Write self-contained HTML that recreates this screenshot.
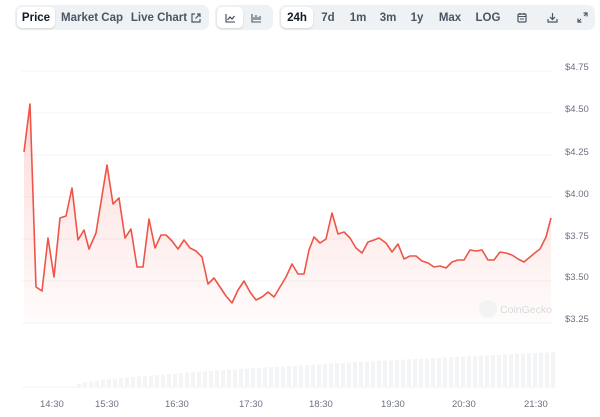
<!DOCTYPE html><html><head><style>
body{margin:0;width:600px;height:417px;background:#fff;font-family:"Liberation Sans",sans-serif;overflow:hidden;position:relative}
.g{position:absolute;top:5px;height:25px;background:#eff2f5;border-radius:7px;display:flex;align-items:center;padding:0 2px;box-sizing:border-box}
.b{height:21px;display:flex;align-items:center;justify-content:center;font-size:11.5px;font-weight:bold;color:#4b5563;border-radius:5px;padding:0 6px;white-space:nowrap;flex:none}
.w{background:#fff;color:#111827;box-shadow:0 1px 2px rgba(0,0,0,.12)}
.yl{position:absolute;left:565px;font-size:9.5px;color:#6b7280}
.xl{position:absolute;top:399px;font-size:9.5px;color:#6b7280}
</style></head><body>
<div class="g" style="left:15px;width:194px"><div class="b w" style="width:38px;padding:0">Price</div><div class="b" style="width:74px;padding:0">Market Cap</div><div class="b" style="width:74px;padding:0">Live Chart <svg width="10" height="10" viewBox="0 0 10 10" style="margin-left:4px"><path d="M4 1H1v8h8V6M6 1h3v3M9 1L4.5 5.5" fill="none" stroke="#4b5563" stroke-width="1.2"/></svg></div></div>
<div class="g" style="left:215px;width:58px"><div class="b w" style="width:26px;padding:0"><svg width="11" height="10"><path d="M1 1v8h9M2.5 7l2.5-3 2 2 2.5-3" fill="none" stroke="#374151" stroke-width="1.1"/></svg></div><div class="b" style="width:26px;padding:0"><svg width="11" height="10"><path d="M1 1v8h9M3 7V4M5 7V2M7 7V4M9 7V3" fill="none" stroke="#4b5563" stroke-width="1.1"/></svg></div></div>
<div class="g" style="left:279px;width:316px"><div class="b w" style="width:32px;padding:0">24h</div><div class="b" style="width:30px;padding:0">7d</div><div class="b" style="width:30px;padding:0">1m</div><div class="b" style="width:30px;padding:0">3m</div><div class="b" style="width:28px;padding:0">1y</div><div class="b" style="width:38px;padding:0">Max</div><div class="b" style="width:38px;padding:0">LOG</div><div class="b" style="width:30px;padding:0"><svg width="10" height="11"><rect x="1" y="2" width="8" height="8" rx="1" fill="none" stroke="#4b5563" stroke-width="1.2"/><path d="M1 4.5h8M3 1v2M7 1v2M3 7h4" stroke="#4b5563" stroke-width="1.1"/></svg></div><div class="b" style="width:30px;padding:0"><svg width="11" height="11"><path d="M5.5 1v6M3 5l2.5 2.5L8 5M1 7v3h9V7" fill="none" stroke="#4b5563" stroke-width="1.2"/></svg></div><div class="b" style="width:30px;padding:0"><svg width="11" height="11"><path d="M6.5 1H10v3.5M10 1L7 4M4.5 10H1V6.5M1 10l3-3" fill="none" stroke="#4b5563" stroke-width="1.2"/></svg></div></div>
<svg width="600" height="417" style="position:absolute;left:0;top:0">
<defs><linearGradient id="f" x1="0" y1="0" x2="0" y2="1"><stop offset="0" stop-color="#f05a4e" stop-opacity=".22"/><stop offset="1" stop-color="#f05a4e" stop-opacity=".02"/></linearGradient></defs>
<g stroke="#f3f3f5" stroke-width="1"><line x1="22" y1="71" x2="552" y2="71"/><line x1="22" y1="113" x2="552" y2="113"/><line x1="22" y1="155" x2="552" y2="155"/><line x1="22" y1="197" x2="552" y2="197"/><line x1="22" y1="239" x2="552" y2="239"/><line x1="22" y1="281" x2="552" y2="281"/><line x1="22" y1="323" x2="552" y2="323"/><line x1="22" y1="387" x2="556" y2="387"/></g>
<path d="M24,152 L30,104 L36,287 L42,291 L48,238 L54,277 L60,218 L66,216 L72,188 L78,240 L84,230 L89,249 L96,233 L107,165 L113,204 L119,198 L125,238 L131,229 L137,267 L143,267 L149,219 L155,248 L161,235 L166,235 L172,241 L178,249 L184,240 L190,248 L196,251 L202,257 L208,284 L214,278 L220,287 L226,296 L232,303 L238,290 L244,281 L250,292 L256,300 L262,297 L268,292 L274,297 L280,287 L286,277 L292,264 L298,274 L304,274 L309,250 L314,237 L320,243 L326,239 L332,213 L338,234 L344,232 L350,238 L356,248 L362,253 L368,242 L374,240 L379,238 L386,243 L392,252 L398,244 L404,259 L410,256 L416,256 L422,261 L428,263 L434,267 L440,266 L446,268 L452,262 L458,260 L464,260 L470,250 L476,251 L482,250 L488,260 L494,260 L500,252 L506,253 L512,255 L518,259 L524,262 L530,257 L536,252 L540,249 L546,237 L551,218" fill="none" stroke="#ee5448" stroke-width="1.6" stroke-linejoin="round"/>
<path d="M24,152 L30,104 L36,287 L42,291 L48,238 L54,277 L60,218 L66,216 L72,188 L78,240 L84,230 L89,249 L96,233 L107,165 L113,204 L119,198 L125,238 L131,229 L137,267 L143,267 L149,219 L155,248 L161,235 L166,235 L172,241 L178,249 L184,240 L190,248 L196,251 L202,257 L208,284 L214,278 L220,287 L226,296 L232,303 L238,290 L244,281 L250,292 L256,300 L262,297 L268,292 L274,297 L280,287 L286,277 L292,264 L298,274 L304,274 L309,250 L314,237 L320,243 L326,239 L332,213 L338,234 L344,232 L350,238 L356,248 L362,253 L368,242 L374,240 L379,238 L386,243 L392,252 L398,244 L404,259 L410,256 L416,256 L422,261 L428,263 L434,267 L440,266 L446,268 L452,262 L458,260 L464,260 L470,250 L476,251 L482,250 L488,260 L494,260 L500,252 L506,253 L512,255 L518,259 L524,262 L530,257 L536,252 L540,249 L546,237 L551,218 L551,323 L24,323Z" fill="url(#f)"/>
<g fill="#f3f4f6" id="v"></g>
<circle cx="488" cy="309" r="9" fill="#f3f3f4"/>
<text x="500" y="313" font-size="10.5" fill="#d8d9dc" font-family="Liberation Sans">CoinGecko</text>
</svg>
<div class="yl" style="top:62px">$4.75</div><div class="yl" style="top:104px">$4.50</div><div class="yl" style="top:147px">$4.25</div><div class="yl" style="top:189px">$4.00</div><div class="yl" style="top:231px">$3.75</div><div class="yl" style="top:272px">$3.50</div><div class="yl" style="top:314px">$3.25</div>
<div class="xl" style="left:40px">14:30</div><div class="xl" style="left:95px">15:30</div><div class="xl" style="left:165px">16:30</div><div class="xl" style="left:239px">17:30</div><div class="xl" style="left:309px">18:30</div><div class="xl" style="left:381px">19:30</div><div class="xl" style="left:452px">20:30</div><div class="xl" style="left:524px">21:30</div>
<script>
var g=document.getElementById('v'),s='';
for(var x=77;x<556;x+=6){var t=(x-77)/479;var h=3+32*Math.pow(t,0.7);s+='<rect x="'+x+'" y="'+(387-h)+'" width="4" height="'+h+'"/>';}
g.innerHTML=s;
</script>
</body></html>
